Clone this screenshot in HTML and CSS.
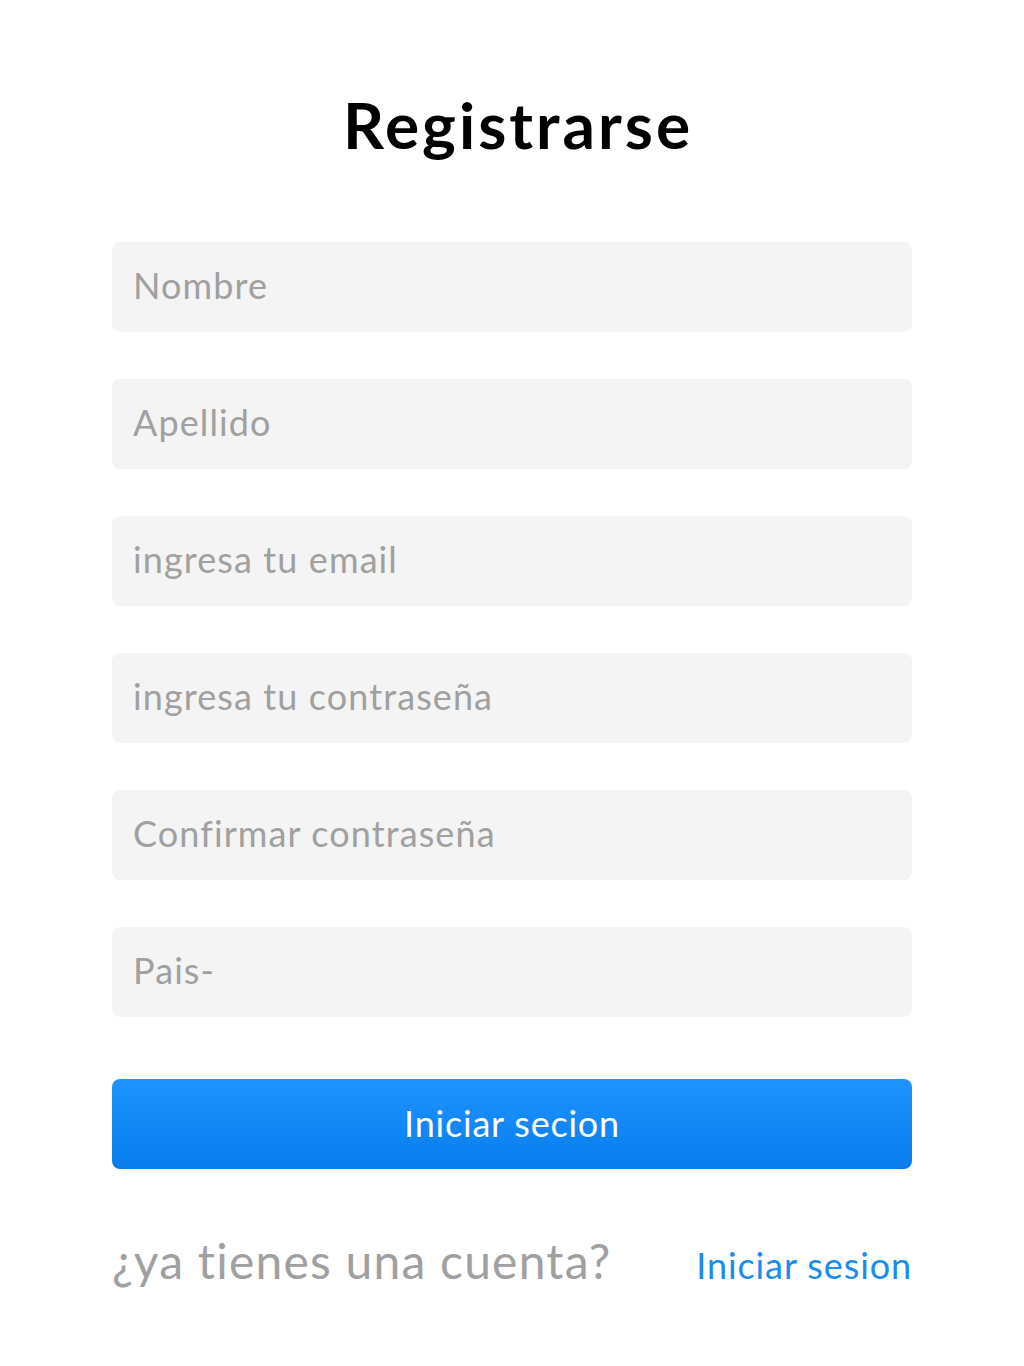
FILE: index.html
```html
<!DOCTYPE html>
<html lang="es">
<head>
<meta charset="utf-8">
<title>Registrarse</title>
<link rel="stylesheet" href="styles.css">
</head>
<body>
<main class="page">
  <h1 class="title">Registrarse</h1>
  <form class="form">
    <input class="field" type="text" placeholder="Nombre">
    <input class="field" type="text" placeholder="Apellido">
    <input class="field" type="email" placeholder="ingresa tu email">
    <input class="field" type="password" placeholder="ingresa tu contraseña">
    <input class="field" type="password" placeholder="Confirmar contraseña">
    <input class="field" type="text" placeholder="Pais-">
    <button class="submit" type="button">Iniciar secion</button>
  </form>
  <div class="footer">
    <span class="question">¿ya tienes una cuenta?</span>
    <a class="link" href="#">Iniciar sesion</a>
  </div>
</main>
</body>
</html>
```

FILE: styles.css
```css
html, body {
  margin: 0;
  padding: 0;
  background: #ffffff;
}

body {
  font-family: "Lato", "Open Sans", sans-serif;
}

.page {
  width: 800px;
  margin: 0 auto;
  display: flex;
  flex-direction: column;
}

.title {
  margin: 0;
  padding: 88px 0 0 12px;
  height: 242px;
  box-sizing: border-box;
  text-align: center;
  font-size: 64px;
  font-weight: 700;
  line-height: 74px;
  color: #000000;
  letter-spacing: 3px;
}

.form {
  display: flex;
  flex-direction: column;
  gap: 47px;
}

.field {
  display: block;
  width: 100%;
  height: 90px;
  box-sizing: border-box;
  border: none;
  outline: none;
  border-radius: 8px;
  background: #f4f4f4;
  padding: 0 21px 4px;
  font-family: inherit;
  font-size: 36px;
  color: #333;
  letter-spacing: 1.1px;
}

.field::placeholder {
  color: #a0a0a0;
  opacity: 1;
}

.submit {
  margin-top: 15px;
  height: 90px;
  width: 100%;
  border: none;
  border-radius: 8px;
  background: linear-gradient(180deg, #1f93ff 0%, #077ded 100%);
  color: #ffffff;
  font-family: inherit;
  font-size: 36px;
  letter-spacing: 0.8px;
  padding: 0 0 2px;
}

.footer {
  display: flex;
  justify-content: space-between;
  align-items: baseline;
  margin-top: 63px;
}

.question {
  font-size: 48px;
  color: #a0a0a0;
  letter-spacing: 1.2px;
}

.link {
  font-size: 36px;
  color: #1a8cf0;
  text-decoration: none;
  letter-spacing: 0.9px;
}
```
